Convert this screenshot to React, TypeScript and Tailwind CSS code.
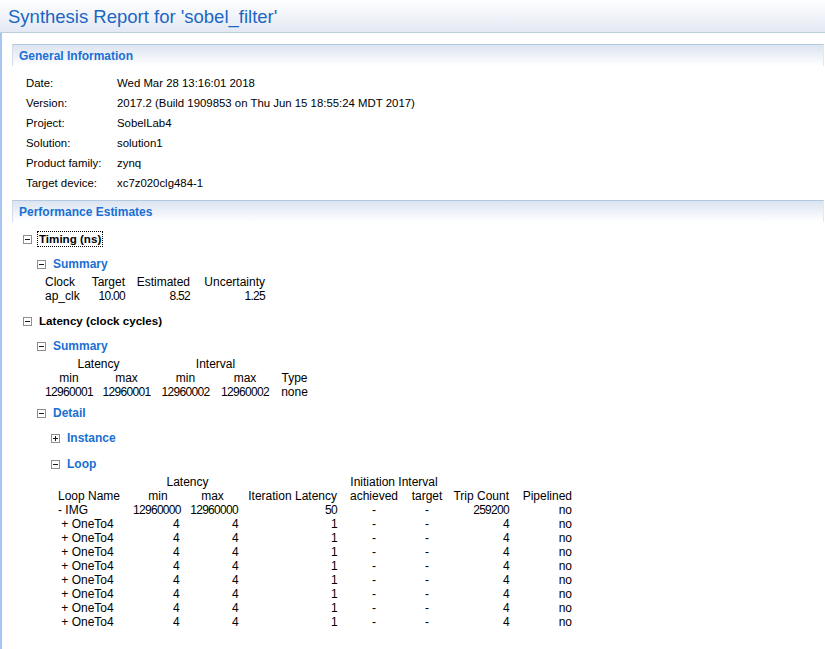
import React from "react";

function Box({ plus }: { plus?: boolean }) {
  return (
    <span className="relative inline-block w-[9px] h-[9px] border border-[#8e8e8e] bg-white shrink-0">
      <span className="absolute left-[1px] top-[3px] w-[5px] h-[1px] bg-[#1a1a1a]" />
      {plus && <span className="absolute left-[3px] top-[1px] w-[1px] h-[5px] bg-[#1a1a1a]" />}
    </span>
  );
}

function SectionHeader({ title }: { title: string }) {
  return (
    <div className="ml-[10px] mr-[1px] h-[22px] border-t border-l border-r border-t-[#b3cade] border-l-[#d5dce6] border-r-[#e3e8ef] bg-gradient-to-b from-[#dbe4f1] to-white flex items-center pl-[6px]">
      <span className="text-[12px] font-bold text-[#1a6fd3]">{title}</span>
    </div>
  );
}

function TreeRow({
  indent,
  label,
  blue,
  plus,
  focus,
  mt,
}: {
  indent: string;
  label: string;
  blue?: boolean;
  plus?: boolean;
  focus?: boolean;
  mt: string;
}) {
  return (
    <div className={`flex items-center h-[16px] ${indent} ${mt}`}>
      <Box plus={plus} />
      <span
        className={`ml-[6px] font-bold leading-[14px] ${
          blue ? "text-[12px] text-[#1a6fd3]" : "text-[11.6px] text-black"
        } ${focus ? "outline outline-1 outline-dotted outline-black px-[1px]" : "px-[1px]"}`}
      >
        {label}
      </span>
    </div>
  );
}

const info: [string, string][] = [
  ["Date:", "Wed Mar 28 13:16:01 2018"],
  ["Version:", "2017.2 (Build 1909853 on Thu Jun 15 18:55:24 MDT 2017)"],
  ["Project:", "SobelLab4"],
  ["Solution:", "solution1"],
  ["Product family:", "zynq"],
  ["Target device:", "xc7z020clg484-1"],
];

type Row = [string, string, string, string, string, string, string, string];
const loops: Row[] = [
  ["- IMG", "12960000", "12960000", "50", "-", "-", "259200", "no"],
  ...Array.from({ length: 8 }, () => ["\u00a0+ OneTo4", "4", "4", "1", "-", "-", "4", "no"] as Row),
];

const num = "tracking-[-0.7px]";

export default function App() {
  return (
    <div className="w-[825px] h-[649px] bg-white overflow-hidden font-['Liberation_Sans',Arial,sans-serif] text-black">
      <div className="h-[33px] border-b border-[#bccfdc] bg-gradient-to-b from-white to-[#e2e9f3] flex items-center pl-[8px] pt-[2px]">
        <span className="text-[18.5px] text-[#1c66c4] leading-none">Synthesis Report for 'sobel_filter'</span>
      </div>
      <div className="h-[616px] border-l-2 border-[#a9c6f3] flex flex-col pt-[11px]">
        <SectionHeader title="General Information" />
        <div className="mt-[8px] pl-[24px] flex flex-col text-[11.4px]">
          {info.map(([k, v]) => (
            <div key={k} className="h-[20px] flex items-center">
              <span className="w-[91px] shrink-0">{k}</span>
              <span>{v}</span>
            </div>
          ))}
        </div>
        <div className="mt-[6px]">
          <SectionHeader title="Performance Estimates" />
        </div>

        <TreeRow indent="pl-[21px]" label="Timing (ns)" focus mt="mt-[9px]" />
        <TreeRow indent="pl-[35px]" label="Summary" blue mt="mt-[9px]" />
        <div className="mt-[3px] pl-[43px] grid grid-cols-[40px_40px_65px_75px] text-[12px] leading-[14px]">
          <div>Clock</div>
          <div className="text-right">Target</div>
          <div className="text-right">Estimated</div>
          <div className="text-right">Uncertainty</div>
          <div>ap_clk</div>
          <div className={`text-right ${num}`}>10.00</div>
          <div className={`text-right ${num}`}>8.52</div>
          <div className={`text-right ${num}`}>1.25</div>
        </div>

        <TreeRow indent="pl-[21px]" label="Latency (clock cycles)" mt="mt-[10px]" />
        <TreeRow indent="pl-[35px]" label="Summary" blue mt="mt-[9px]" />
        <div className="mt-[3px] pl-[39px] grid grid-cols-[56px_59px_59px_60px_39px] text-[12px] leading-[14px] text-center">
          <div className="col-span-2">Latency</div>
          <div className="col-span-2">Interval</div>
          <div />
          <div>min</div>
          <div>max</div>
          <div>min</div>
          <div>max</div>
          <div>Type</div>
          <div className={num}>12960001</div>
          <div className={num}>12960001</div>
          <div className={num}>12960002</div>
          <div className={num}>12960002</div>
          <div>none</div>
        </div>

        <TreeRow indent="pl-[35px]" label="Detail" blue mt="mt-[6px]" />
        <TreeRow indent="pl-[49px]" label="Instance" blue plus mt="mt-[9px]" />
        <TreeRow indent="pl-[49px]" label="Loop" blue mt="mt-[10px]" />
        <div className="mt-[3px] pl-[52px] grid grid-cols-[79px_50px_59px_99px_66px_40px_66px_63px] text-[12px] leading-[14px]">
          <div />
          <div className="col-span-2 text-center">Latency</div>
          <div />
          <div className="col-span-2 text-center">Initiation Interval</div>
          <div />
          <div />
          <div className="pl-[4px]">Loop Name</div>
          <div className="text-center">min</div>
          <div className="text-center">max</div>
          <div className="text-right pr-[4px]">Iteration Latency</div>
          <div className="text-center">achieved</div>
          <div className="text-center">target</div>
          <div className="text-right pr-[4px]">Trip Count</div>
          <div className="text-right pr-[4px]">Pipelined</div>
          {loops.map((r, i) => (
            <React.Fragment key={i}>
              <div className="pl-[4px] whitespace-pre">{r[0]}</div>
              <div className={`text-right pr-[4px] ${num}`}>{r[1]}</div>
              <div className={`text-right pr-[4px] ${num}`}>{r[2]}</div>
              <div className={`text-right pr-[4px] ${num}`}>{r[3]}</div>
              <div className="text-center">{r[4]}</div>
              <div className="text-center">{r[5]}</div>
              <div className={`text-right pr-[4px] ${num}`}>{r[6]}</div>
              <div className="text-right pr-[4px]">{r[7]}</div>
            </React.Fragment>
          ))}
        </div>
      </div>
    </div>
  );
}
